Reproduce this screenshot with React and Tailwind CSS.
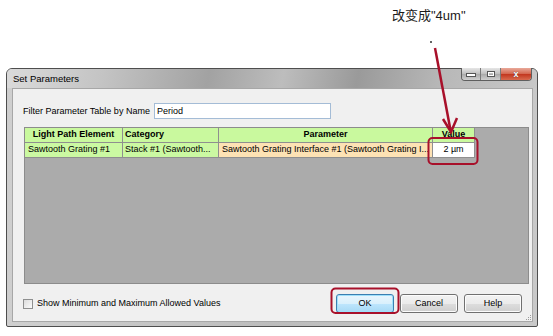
import React from 'react';

function WinButton({ label, primary }) {
    return (
        <button
            className={
                'w-[58px] h-[19px] rounded-[3px] border text-[9px] text-black leading-none ' +
                (primary
                    ? 'border-[#3c7fb1] bg-[linear-gradient(#eaf6fd_0%,#d9f0fc_50%,#bee6fd_51%,#a7d9f5_100%)] shadow-[inset_0_0_0_1px_#9fe0fb]'
                    : 'border-[#707070] bg-[linear-gradient(#f2f2f2_0%,#ebebeb_50%,#dddddd_51%,#cfcfcf_100%)] shadow-[inset_0_0_0_1px_#fcfcfc]')
            }
        >
            {label}
        </button>
    );
}

export default function App() {
    return (
        <div className="relative w-[553px] h-[336px] bg-white overflow-hidden font-['Liberation_Sans',Arial,sans-serif] text-black">

            {/* annotation text */}
            <p className="absolute left-[392px] top-[9px] text-[13px] leading-none font-['Liberation_Sans','Noto_Sans_CJK_SC',sans-serif] text-[#1a1a1a]">
                改变成"4um"
            </p>

            {/* dialog */}
            <div className="pt-[68px] pl-[6px]">
                <div className="relative w-[532px] h-[259px] rounded-t-[6px] rounded-b-[2px] border border-[#4e4e4e] bg-[linear-gradient(90deg,#cfcfcf_0%,#bcbcbc_50%,#c9c9c9_100%)] flex flex-col">

                    {/* title bar */}
                    <div className="h-[19px] rounded-t-[5px] flex items-center pl-[6px] bg-[linear-gradient(100deg,#dadada_0%,#c4c4c4_18%,#a2a2a2_38%,#bdbdbd_52%,#9a9a9a_66%,#b8b8b8_82%,#c8c8c8_100%)]">
                        <span className="text-[9.5px] leading-none pt-[1px]">Set Parameters</span>
                    </div>

                    {/* caption buttons */}
                    <div className="absolute right-[5px] top-[-1px] flex h-[13px] rounded-b-[4px] border border-t-0 border-[#5f5f5f] overflow-hidden">
                        <div className="w-[19px] h-full flex items-end justify-center pb-[3px] bg-[linear-gradient(#e6e6e6,#bdbdbd_50%,#a9a9a9_51%,#cfcfcf)] border-r border-[#7a7a7a]">
                            <div className="w-[8px] h-[2px] bg-white border border-[#555] box-content" />
                        </div>
                        <div className="w-[20px] h-full flex items-center justify-center bg-[linear-gradient(#e6e6e6,#bdbdbd_50%,#a9a9a9_51%,#cfcfcf)] border-r border-[#7a7a7a]">
                            <div className="w-[6px] h-[4px] border-[1.5px] border-white outline outline-1 outline-[#555]" />
                        </div>
                        <div className="w-[30px] h-full flex items-center justify-center bg-[linear-gradient(#e9a99a,#d3644c_50%,#c2351d_51%,#d86a4e)]">
                            <span className="text-white text-[9px] font-bold leading-none [text-shadow:0_0_1px_#333]">x</span>
                        </div>
                    </div>

                    {/* client area */}
                    <div className="flex-1 ml-[5px] mr-[4px] mb-[4px] bg-[#f0f0f0] border border-[#a7a7a7] flex flex-col">

                        {/* filter row */}
                        <div className="flex items-center mt-[14px] ml-[10px] gap-[4px]">
                            <span className="text-[9px] leading-none">Filter Parameter Table by Name</span>
                            <div className="w-[177px] h-[16px] bg-white border border-[#a4bcd6] flex items-center pl-[2px]">
                                <span className="text-[9px] leading-none">Period</span>
                            </div>
                        </div>

                        {/* table */}
                        <div className="mt-[8px] ml-[11px] mr-[3px] h-[157px] bg-[#ababab] border border-[#8c8c8c]">
                            <div className="flex">
                                <div className="w-[98px] h-[15px] bg-[#c9f99e] border-r border-b border-[#8f8f8f] flex items-center justify-center text-[9px] font-bold">Light Path Element</div>
                                <div className="w-[96px] h-[15px] bg-[#c9f99e] border-r border-b border-[#8f8f8f] flex items-center pl-[2px] text-[9px] font-bold">Category</div>
                                <div className="w-[214px] h-[15px] bg-[#c9f99e] border-r border-b border-[#8f8f8f] flex items-center justify-center text-[9px] font-bold">Parameter</div>
                                <div className="w-[42px] h-[15px] bg-[#c9f99e] border-r border-b border-[#8f8f8f] flex items-center justify-center text-[9px] font-bold">Value</div>
                            </div>
                            <div className="flex">
                                <div className="w-[98px] h-[15px] bg-[#cbf9a2] border-r border-b border-[#8f8f8f] flex items-center pl-[3px] text-[9px] whitespace-nowrap overflow-hidden">Sawtooth Grating #1</div>
                                <div className="w-[96px] h-[15px] bg-[#cbf9a2] border-r border-b border-[#8f8f8f] flex items-center pl-[2px] text-[9px] whitespace-nowrap overflow-hidden">Stack #1 (Sawtooth...</div>
                                <div className="w-[214px] h-[15px] bg-[#fde2b4] border-r border-b border-[#8f8f8f] flex items-center pl-[3px] text-[9px] whitespace-nowrap overflow-hidden">Sawtooth Grating Interface #1 (Sawtooth Grating I...</div>
                                <div className="w-[42px] h-[15px] bg-white border-r border-b border-[#8f8f8f] flex items-center justify-center text-[9px] whitespace-nowrap">2 µm</div>
                            </div>
                        </div>

                        {/* bottom row */}
                        <div className="mt-[10px] ml-[10px] mr-[10px] flex items-center">
                            <div className="w-[10px] h-[10px] border border-[#8e8f8f] bg-[linear-gradient(135deg,#dcdcdc,#fbfbfb)]" />
                            <span className="ml-[4px] text-[9px] leading-none">Show Minimum and Maximum Allowed Values</span>
                            <div className="ml-auto flex gap-[6px]">
                                <WinButton label="OK" primary />
                                <WinButton label="Cancel" />
                                <WinButton label="Help" />
                            </div>
                        </div>

                        {/* size grip */}
                        <div className="mt-auto self-end mr-[1px] mb-[1px] grid grid-cols-3 gap-[1px]">
                            <span />
                            <span />
                            <span className="w-[1px] h-[1px] bg-[#9a9a9a]" />
                            <span />
                            <span className="w-[1px] h-[1px] bg-[#9a9a9a]" />
                            <span className="w-[1px] h-[1px] bg-[#9a9a9a]" />
                            <span className="w-[1px] h-[1px] bg-[#9a9a9a]" />
                            <span className="w-[1px] h-[1px] bg-[#9a9a9a]" />
                            <span className="w-[1px] h-[1px] bg-[#9a9a9a]" />
                        </div>
                    </div>
                </div>
            </div>

            {/* red annotations: arrow + highlight boxes */}
            <svg className="absolute inset-0 pointer-events-none" width="553" height="336">
                <circle cx="431" cy="42" r="1" fill="#333" />
                <line x1="435" y1="48" x2="450.5" y2="130" stroke="#a8102a" strokeWidth="2.5" />
                <polyline points="443,119 451,132 457,118" fill="none" stroke="#a8102a" strokeWidth="2.5" strokeLinejoin="miter" />
                <rect x="428.5" y="138" width="49" height="26" rx="4" fill="none" stroke="#a8102a" strokeWidth="2" />
                <rect x="331.5" y="288.5" width="67" height="24.5" rx="4" fill="none" stroke="#a8102a" strokeWidth="2" />
            </svg>
        </div>
    );
}
